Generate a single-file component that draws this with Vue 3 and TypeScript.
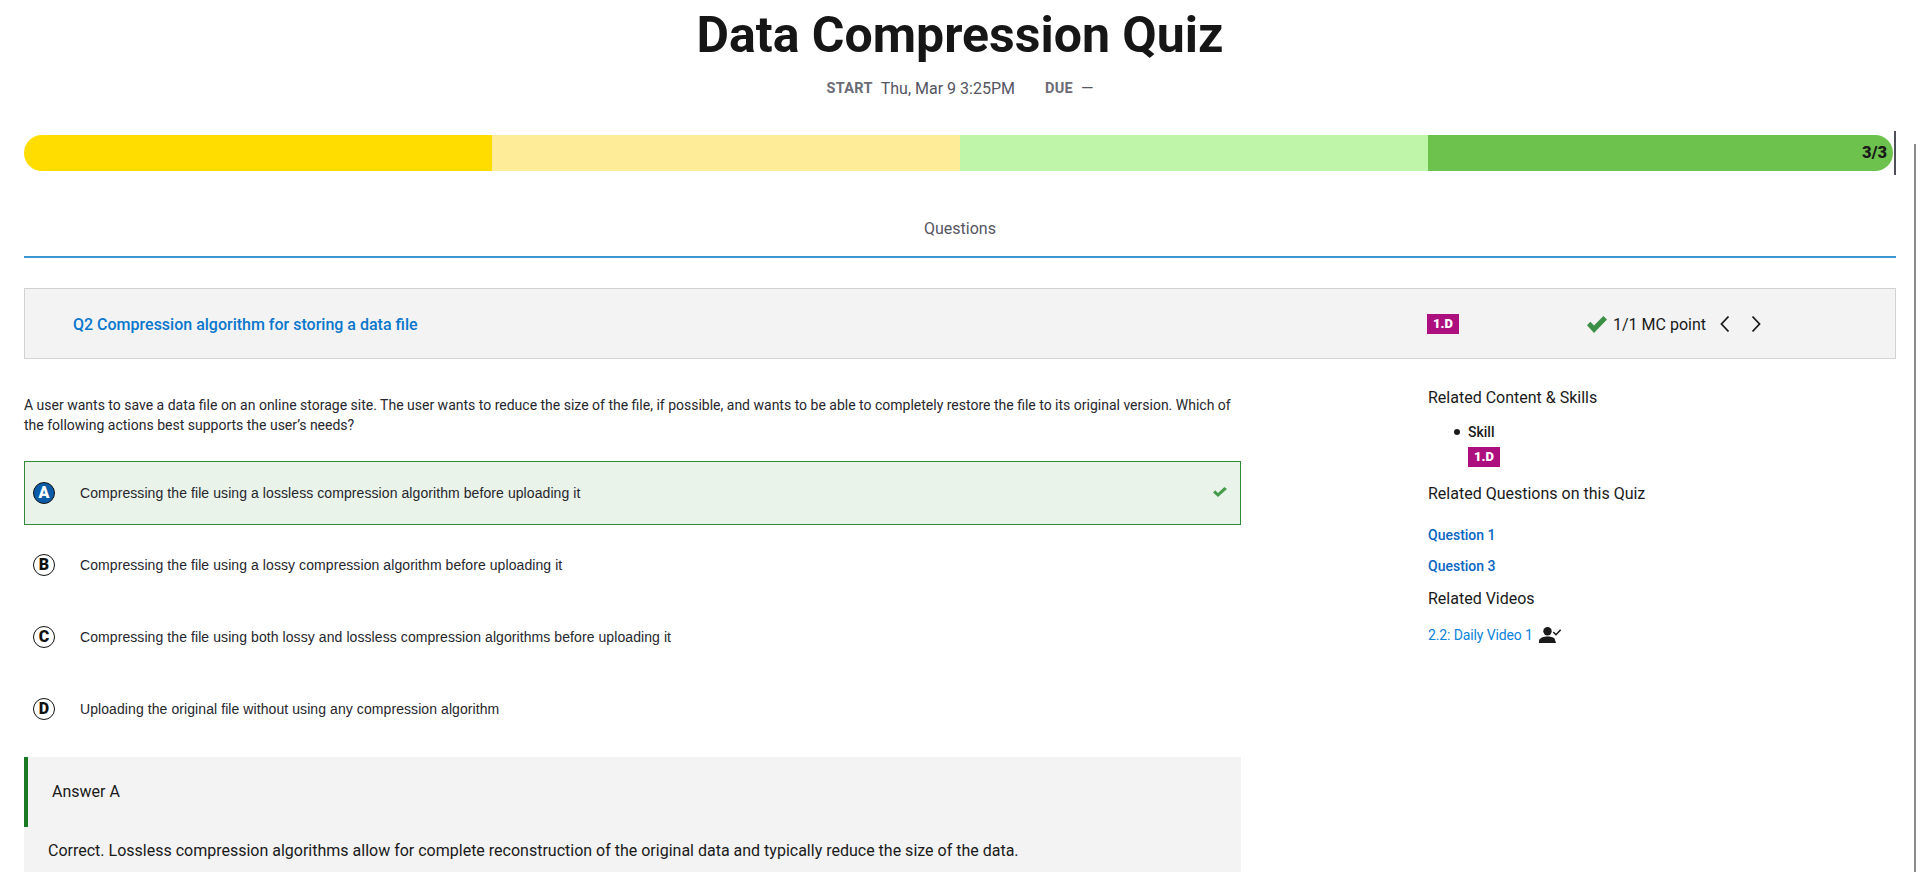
<template>
  <div class="page">
    <span class="page-scroll"></span>
    <header class="quiz-head">
      <h1>Data Compression Quiz</h1>
      <div class="dates">
        <span class="date-label">START</span>
        <span class="date-value">Thu, Mar 9 3:25PM</span>
        <span class="date-label due">DUE</span>
        <span class="date-value">—</span>
      </div>
    </header>

    <div class="progress">
      <div v-for="color in segments" :key="color" class="segment" :style="{ background: color }"></div>
      <span class="progress-count">3/3</span>
      <span class="progress-tick"></span>
    </div>

    <div class="tabs"><span>Questions</span></div>

    <section class="question-bar">
      <a class="question-title">Q2 Compression algorithm for storing a data file</a>
      <span class="skill-badge bar-badge">1.D</span>
      <div class="score">
        <svg class="score-check" viewBox="0 0 20 17" width="20" height="17">
          <path d="M0 9.2 L3.4 5.8 L7 9.4 L16.4 0 L20 3.4 L7 17 Z" fill="#3c8f47" />
        </svg>
        <span>1/1 MC point</span>
        <svg class="chevron" viewBox="0 0 10 18" width="10" height="18">
          <path d="M8.5 1.5 L1.5 9 L8.5 16.5" />
        </svg>
        <svg class="chevron next" viewBox="0 0 10 18" width="10" height="18">
          <path d="M1.5 1.5 L8.5 9 L1.5 16.5" />
        </svg>
      </div>
    </section>

    <div class="columns">
      <main class="main-col">
        <p class="prompt">
          A user wants to save a data file on an online storage site. The user wants to reduce the size of the file, if possible, and wants to be able to completely restore the file to its original version. Which of the following actions best supports the user’s needs?
        </p>
        <div class="options">
          <div v-for="opt in options" :key="opt.letter" class="option" :class="{ correct: opt.correct }">
            <span class="letter">{{ opt.letter }}</span>
            <span class="option-text">{{ opt.text }}</span>
            <svg v-if="opt.correct" class="option-check" viewBox="0 0 14 10" width="14" height="10">
              <path d="M0 5.4 L2.2 3.2 L5 6 L11.4 0 L14 2 L5 10 Z" fill="#479c4b" />
            </svg>
          </div>
        </div>
        <div class="answer">
          <div class="answer-title">Answer A</div>
          <p class="answer-text">Correct. Lossless compression algorithms allow for complete reconstruction of the original data and typically reduce the size of the data.</p>
        </div>
      </main>

      <aside class="side-col">
        <h4>Related Content &amp; Skills</h4>
        <ul class="skills">
          <li>
            <span class="skill-name">Skill</span>
            <span class="skill-badge">1.D</span>
          </li>
        </ul>
        <h4>Related Questions on this Quiz</h4>
        <div class="related-questions">
          <a>Question 1</a>
          <a>Question 3</a>
        </div>
        <h4 class="videos-title">Related Videos</h4>
        <div class="video-row">
          <a>2.2: Daily Video 1</a>
          <svg viewBox="0 0 22 16" width="22" height="16">
            <circle cx="8.5" cy="4.2" r="4.2" fill="#1a1a1a" />
            <path d="M0 16 V14 C0 11 5 9.6 8.6 9.6 C11 9.6 14 10.2 15.5 11.5 L17 16 Z" fill="#1a1a1a" />
            <path d="M14.3 5 L17 7.7 L21.7 2.7" fill="none" stroke="#1a1a1a" stroke-width="1.6" />
          </svg>
        </div>
      </aside>
    </div>
  </div>
</template>

<script setup lang="ts">
interface Option {
  letter: string;
  text: string;
  correct?: boolean;
}

const segments: string[] = ['#ffdd00', '#ffec99', '#bef5a8', '#6cc24c'];

const options: Option[] = [
  { letter: 'A', text: 'Compressing the file using a lossless compression algorithm before uploading it', correct: true },
  { letter: 'B', text: 'Compressing the file using a lossy compression algorithm before uploading it' },
  { letter: 'C', text: 'Compressing the file using both lossy and lossless compression algorithms before uploading it' },
  { letter: 'D', text: 'Uploading the original file without using any compression algorithm' },
];
</script>

<style>
html, body {
  margin: 0;
  height: 872px;
  overflow: hidden;
  background: #fff;
}
</style>

<style scoped>
.page {
  position: relative;
  height: 872px;
  overflow: hidden;
  padding: 0 24px;
  box-sizing: border-box;
  font-family: Roboto, "Liberation Sans", sans-serif;
  color: #1a1a1a;
}

.page-scroll {
  position: absolute;
  left: 1914px;
  top: 144px;
  bottom: 0;
  width: 2px;
  background: #8a8a8a;
}

.quiz-head {
  text-align: center;
}

h1 {
  margin: 0;
  padding-top: 6px;
  font-size: 50px;
  line-height: 58px;
  font-weight: 700;
  color: #161616;
}

.dates {
  margin-top: 14px;
  height: 20px;
  display: flex;
  justify-content: center;
  align-items: center;
  font-size: 16px;
}

.date-label {
  font-size: 14.5px;
  font-weight: 700;
  letter-spacing: 0.3px;
  color: #6b6b76;
  margin-right: 8px;
}

.date-label.due {
  margin-left: 30px;
  margin-right: 8px;
}

.date-value {
  color: #55555f;
}

.progress {
  position: relative;
  display: flex;
  margin-top: 37px;
  width: 1869px;
  height: 36px;
}

.segment {
  flex: 0 0 468px;
}

.segment:first-child {
  border-radius: 18px 0 0 18px;
}

.segment:nth-child(4) {
  flex: 1;
  border-radius: 0 18px 18px 0;
}

.progress-count {
  position: absolute;
  right: 6px;
  top: 0;
  line-height: 36px;
  font-size: 16.5px;
  font-weight: 900;
  color: #1a1a1a;
}

.progress-tick {
  position: absolute;
  left: 1870px;
  top: -4px;
  width: 2px;
  height: 44px;
  background: #4f4f5a;
}

.tabs {
  margin-top: 41px;
  height: 46px;
  text-align: center;
  font-size: 16px;
  line-height: 34px;
  color: #55555f;
  border-bottom: 2px solid #3d96d4;
  box-sizing: border-box;
}

.question-bar {
  display: flex;
  align-items: center;
  margin-top: 30px;
  height: 71px;
  padding: 1px 0 0 48px;
  background: #f3f3f3;
  border: 1px solid #d2d2d2;
  box-sizing: border-box;
}

.question-title {
  flex: 0 0 1354px;
  font-size: 16px;
  font-weight: 500;
  color: #0a77cc;
}

.skill-badge {
  display: block;
  width: 32px;
  height: 20px;
  line-height: 20px;
  text-align: center;
  background: #ae0f7e;
  color: #fff;
  font-size: 13px;
  font-weight: 900;
}

.bar-badge {
  flex: none;
}

.score {
  display: flex;
  align-items: center;
  margin-left: 128px;
  font-size: 16px;
}

.score-check {
  margin-right: 6px;
}

.chevron {
  margin-left: 14px;
  fill: none;
  stroke: #1a1a1a;
  stroke-width: 1.8;
}

.chevron.next {
  margin-left: 21px;
}

.columns {
  display: flex;
}

.main-col {
  flex: 0 0 1217px;
}

.prompt {
  margin: 36px 0 0;
  font-size: 14px;
  line-height: 20px;
  color: #26262c;
}

.options {
  display: flex;
  flex-direction: column;
  gap: 8px;
  margin-top: 26px;
}

.option {
  display: flex;
  align-items: center;
  height: 64px;
  padding-left: 8px;
  border: 1px solid transparent;
  box-sizing: border-box;
}

.option.correct {
  background: #e9f3ea;
  border-color: #2f8a3a;
}

.letter {
  flex: none;
  box-sizing: border-box;
  width: 22px;
  height: 22px;
  border: 1px solid #111;
  border-radius: 50%;
  text-align: center;
  font-size: 16px;
  line-height: 20px;
  font-weight: 900;
  color: #111;
  background: #fff;
}

.correct .letter {
  background: #0a5ca8;
  color: #fff;
}

.option-text {
  margin-left: 25px;
  font-family: "Liberation Sans", Arial, sans-serif;
  font-size: 14px;
  letter-spacing: 0.08px;
  color: #26262c;
}

.option-check {
  margin-left: auto;
  margin-right: 13px;
  margin-top: -2px;
}

.answer {
  margin-top: 16px;
  height: 140px;
  background: #f3f3f3;
}

.answer-title {
  height: 70px;
  line-height: 70px;
  padding-left: 24px;
  border-left: 4px solid #1a7a24;
  font-size: 16px;
}

.answer-text {
  margin: 13px 0 0;
  padding-left: 24px;
  font-size: 16px;
  line-height: 22px;
  color: #1a1a1a;
}

.side-col {
  margin-left: 187px;
  padding-top: 29px;
  flex: 1;
}

h4 {
  margin: 0;
  font-size: 16px;
  font-weight: 400;
  line-height: 20px;
}

.skills {
  margin: 14px 0 0;
  padding-left: 40px;
  font-size: 14px;
  list-style: none;
}

.skills li {
  position: relative;
  line-height: 20px;
}

.skills li::before {
  content: "";
  position: absolute;
  left: -14px;
  top: 7px;
  width: 6px;
  height: 6px;
  border-radius: 50%;
  background: #1a1a1a;
}

.skill-name {
  display: block;
  font-weight: 500;
}

.skills .skill-badge {
  margin-top: 5px;
}

.skills + h4 {
  margin-top: 17px;
}

.related-questions {
  display: flex;
  flex-direction: column;
  gap: 11px;
  margin-top: 21px;
  font-size: 14px;
  font-weight: 500;
  line-height: 20px;
  color: #0a66c2;
}

.videos-title {
  margin-top: 13px;
}

.video-row {
  display: flex;
  align-items: center;
  gap: 6px;
  margin-top: 16px;
  height: 20px;
  font-size: 14px;
  letter-spacing: -0.12px;
  color: #0a84d8;
}
</style>
